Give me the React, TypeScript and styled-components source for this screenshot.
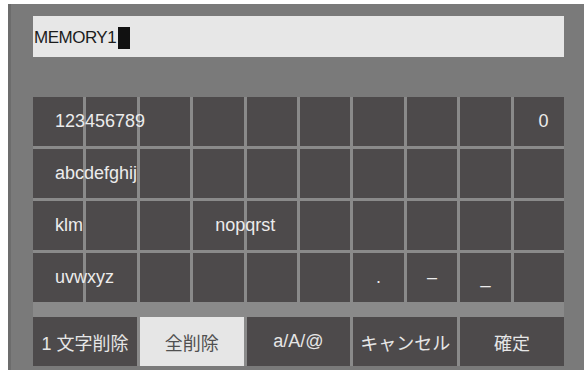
import React from "react";
import styled, { createGlobalStyle } from "styled-components";

const Global = createGlobalStyle`
  html, body { margin: 0; padding: 0; background: #ffffff; }
  * { box-sizing: border-box; }
`;

const Panel = styled.div`
  margin: 4px 0 0 8px;
  width: 576px;
  height: 366px;
  background: #7a7a7a;
  border-left: 3px solid #6c6c6c;
  padding: 12px 0 4px 22px;
  display: flex;
  flex-direction: column;
  font-family: "Liberation Sans", "Noto Sans CJK JP", sans-serif;
`;

const InputBox = styled.div`
  width: 531px;
  height: 41px;
  background: #e7e7e7;
  display: flex;
  align-items: center;
  padding: 3px 0 0 1px;
  color: #1c1c1c;
  font-size: 17px;
  letter-spacing: -0.5px;
`;

const Cursor = styled.span`
  display: inline-block;
  width: 12px;
  height: 22px;
  background: #111;
  margin-left: 2px;
`;

const Keyboard = styled.div`
  margin-top: 40px;
  width: 531px;
  background: #8a8a8a;
  display: flex;
  flex-direction: column;
  gap: 15px;
`;

const Grid = styled.div`
  display: grid;
  grid-template-columns: repeat(10, minmax(0, 1fr));
  grid-template-rows: repeat(4, 49px);
  gap: 3px;
`;

const Cell = styled.div<{ $pad?: number; $center?: boolean; $hasText?: boolean }>`
  background: #4d4a4b;
  color: #ececec;
  font-size: 18px;
  display: flex;
  align-items: center;
  justify-content: ${(p) => (p.$center ? "center" : "flex-start")};
  padding-left: ${(p) => (p.$center ? 0 : p.$pad ?? 22)}px;
  white-space: nowrap;
  overflow: visible;
  min-width: 0;
  position: relative;
  z-index: ${(p) => (p.$hasText ? 1 : 0)};
`;

const ButtonRow = styled.div`
  display: grid;
  grid-template-columns: repeat(5, minmax(0, 1fr));
  gap: 3px;
  height: 49px;
`;

const Button = styled.div<{ $active?: boolean }>`
  background: ${(p) => (p.$active ? "#e6e6e6" : "#4d4a4b")};
  color: ${(p) => (p.$active ? "#505050" : "#e6e6e6")};
  font-size: 18px;
  display: flex;
  align-items: center;
  justify-content: center;
  white-space: nowrap;
  min-width: 0;
`;

type CellDef = { text?: string; pad?: number; center?: boolean };

const rows: CellDef[][] = [
  [{ text: "123456789" }, {}, {}, {}, {}, {}, {}, {}, {}, { text: "0", pad: 25 }],
  [{ text: "abcdefghij" }, {}, {}, {}, {}, {}, {}, {}, {}, {}],
  [{ text: "klm" }, {}, {}, { text: "nopqrst" }, {}, {}, {}, {}, {}, {}],
  [
    { text: "uvwxyz" },
    {},
    {},
    {},
    {},
    {},
    { text: ".", center: true },
    { text: "–", center: true },
    { text: "_", center: true },
    {},
  ],
];

const buttons = ["1 文字削除", "全削除", "a/A/@", "キャンセル", "確定"];

export default function App() {
  return (
    <>
      <Global />
      <Panel>
        <InputBox>
          MEMORY1
          <Cursor />
        </InputBox>
        <Keyboard>
          <Grid>
            {rows.map((row, r) =>
              row.map((c, i) => (
                <Cell key={`${r}-${i}`} $pad={c.pad} $center={c.center} $hasText={!!c.text}>
                  {c.text}
                </Cell>
              ))
            )}
          </Grid>
          <ButtonRow>
            {buttons.map((b, i) => (
              <Button key={b} $active={i === 1}>
                {b}
              </Button>
            ))}
          </ButtonRow>
        </Keyboard>
      </Panel>
    </>
  );
}
